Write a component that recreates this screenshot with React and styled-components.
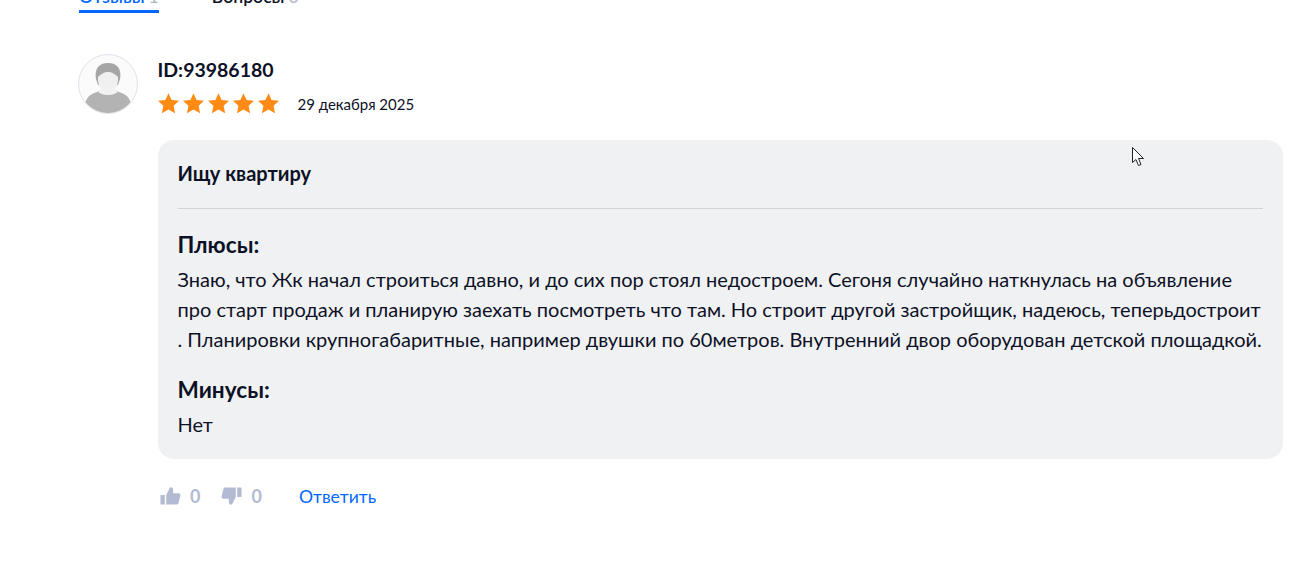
import React from "react";
import styled, { createGlobalStyle } from "styled-components";

const Global = createGlobalStyle`
  html, body { margin: 0; padding: 0; background: #fff; overflow: hidden; }
  body { font-family: Lato, "Noto Sans", sans-serif; color: #0d1126; }
`;
const Page = styled.div`
  position: relative;
  width: 1310px;
  height: 564px;
  overflow: hidden;
  padding-left: 78px;
  box-sizing: border-box;
`;
const Tabs = styled.div`
  display: flex;
  gap: 53px;
  margin-top: -13px;
  margin-left: 1px;
  height: 26px;
`;
const Tab = styled.div`
  height: 23px;
  line-height: 19px;
  font-size: 17.6px;
  font-weight: 600;
  border-bottom: 3px solid ${p => (p.$active ? "#0468ff" : "transparent")};
  color: ${p => (p.$active ? "#0468ff" : "#0d1126")};
  white-space: nowrap;
`;
const Count = styled.span`
  color: #b0b5c2;
  font-weight: 400;
  margin-left: 4px;
`;
const Review = styled.div`
  margin-top: 41px;
  width: 1205px;
`;
const Head = styled.div`
  display: flex;
  gap: 20px;
`;
const Avatar = styled.div`
  width: 60px;
  height: 60px;
  box-sizing: border-box;
  border: 1px solid #dfe3ee;
  border-radius: 50%;
  overflow: hidden;
  background: #fbfbfb;
  flex: none;
`;
const Meta = styled.div`
  display: flex;
  flex-direction: column;
  padding-top: 4px;
  margin-left: -0.5px;
`;
const Name = styled.div`
  font-size: 19.5px;
  line-height: 24px;
  font-weight: 700;
`;
const RatingRow = styled.div`
  display: flex;
  align-items: center;
  margin-top: 11px;
`;
const Stars = styled.div`
  display: flex;
  gap: 4px;
`;
const DateText = styled.div`
  font-size: 15px;
  line-height: 18px;
  margin-left: 19px;
  margin-top: 1px;
`;
const Card = styled.div`
  margin: 26px 0 0 80px;
  height: 319px;
  box-sizing: border-box;
  padding: 19px 20px 20px;
  background: #f0f1f3;
  border-radius: 16px;
`;
const Title = styled.div`
  font-size: 20px;
  line-height: 28px;
  font-weight: 700;
  margin-left: -0.5px;
  padding-bottom: 21px;
  border-bottom: 1px solid #d0d2d8;
`;
const SectionTitle = styled.div`
  font-size: 22.6px;
  line-height: 28px;
  font-weight: 700;
  margin-left: -0.5px;
  margin-top: ${p => p.$top}px;
`;
const Body = styled.div`
  font-size: 20px;
  line-height: 30px;
  margin-top: 5px;
  margin-left: -0.5px;
  margin-right: -0.5px;
`;
const Actions = styled.div`
  display: flex;
  align-items: center;
  margin: 25px 0 0 82px;
  height: 24px;
`;
const Vote = styled.div`
  display: flex;
  align-items: center;
  gap: 9px;
  margin-right: 21px;
  color: #b3bbd3;
  font-size: 18px;
  font-weight: 700;
`;
const Reply = styled.a`
  color: #0468ff;
  font-size: 17.6px;
  margin-left: 16px;
`;
const Cursor = styled.svg`
  position: absolute;
  left: 1132px;
  top: 147px;
`;

const Star = () => (
  <svg width="21" height="21" viewBox="0 0 21 21">
    <path fill="#ff8a14" d="M10.5 0.3l3.1 6.7 7.4.8-5.4 5 1.5 7.5-6.6-3.8-6.6 3.8 1.5-7.5L0 7.8l7.4-.8z" />
  </svg>
);
const Thumb = ({ down }) => (
  <svg width="21" height="20" viewBox="0 0 22 20" style={down ? { transform: "scale(-1,-1)" } : undefined}>
    <path fill="#b3bbd3" d="M0.5 9h4.5v10H1.5a1 1 0 0 1-1-1zM6.5 9l4-8c1.8-.6 3.3.6 3.3 2.4V7h5.7c1.3 0 2.2 1.2 1.9 2.4l-2 8.2c-.3 1-1.1 1.4-2 1.4H6.5z" />
  </svg>
);

export default function App() {
  return (
    <Page>
      <Global />
      <Tabs>
        <Tab $active>Отзывы<Count>1</Count></Tab>
        <Tab>Вопросы<Count>0</Count></Tab>
      </Tabs>
      <Review>
        <Head>
          <Avatar>
            <svg width="58" height="58" viewBox="0 0 58 58">
              <path fill="#b3b3b3" d="M5 58c0-14 4-18 13-21l5-3h12l5 3c9 3 13 7 13 21z" />
              <path fill="#f4f4f4" d="M19 37c3 2 6 3 10 3s7-1 10-3l-3-3H22z" />
              <path fill="#a6a6a6" d="M17 24c-2-10 3-16 12-16s14 6 12 16l-2 6H19z" />
              <path fill="#f0f0f0" d="M19 22c3-3 6-5 10-5s7 2 10 5c1 8-5 17-10 17s-11-9-10-17z" />
            </svg>
          </Avatar>
          <Meta>
            <Name>ID:93986180</Name>
            <RatingRow>
              <Stars>{[0, 1, 2, 3, 4].map(i => <Star key={i} />)}</Stars>
              <DateText>29 декабря 2025</DateText>
            </RatingRow>
          </Meta>
        </Head>
        <Card>
          <Title>Ищу квартиру</Title>
          <SectionTitle $top={22}>Плюсы:</SectionTitle>
          <Body>Знаю, что Жк начал строиться давно, и до сих пор стоял недостроем. Сегоня случайно наткнулась на объявление про старт продаж и планирую заехать посмотреть что там. Но строит другой застройщик, надеюсь, теперьдостроит . Планировки крупногабаритные, например двушки по 60метров. Внутренний двор оборудован детской площадкой.</Body>
          <SectionTitle $top={22}>Минусы:</SectionTitle>
          <Body>Нет</Body>
        </Card>
        <Actions>
          <Vote><Thumb />0</Vote>
          <Vote><Thumb down />0</Vote>
          <Reply>Ответить</Reply>
        </Actions>
      </Review>
      <Cursor width="13" height="20" viewBox="0 0 13 20">
        <path fill="#fff" stroke="#222" strokeWidth="1" d="M0.5 0.5v15l3.5-3 2.5 6 2.5-1-2.5-6h5z" />
      </Cursor>
    </Page>
  );
}
